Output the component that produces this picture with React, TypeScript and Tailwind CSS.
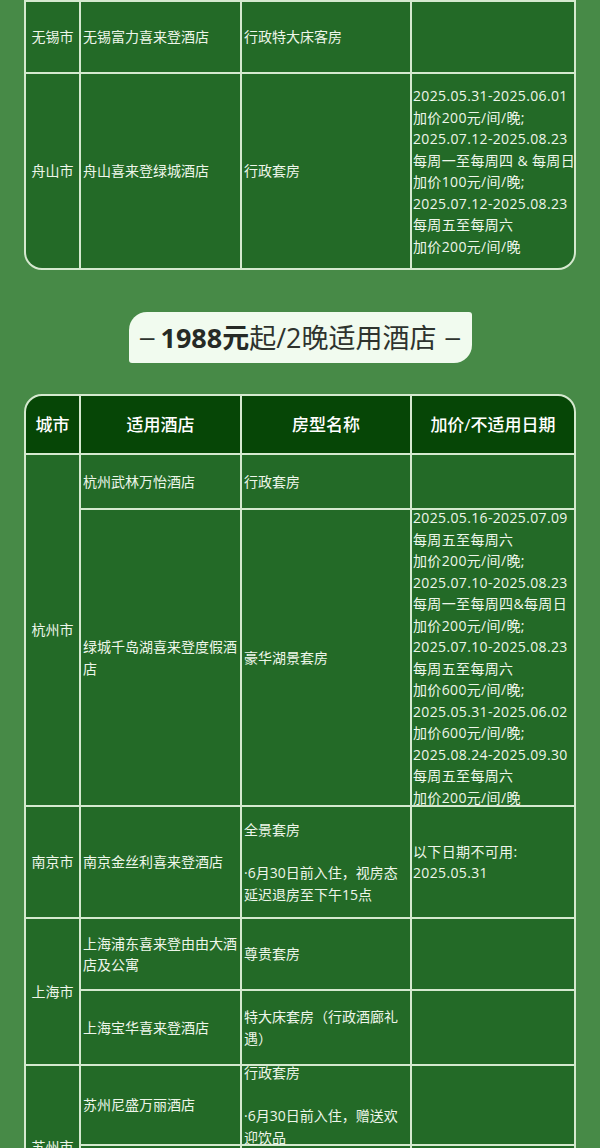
import React from "react";

/* 酒店适用表 — 两段表格 + 中间价格标题 */

const FONT = { fontFamily: '"Open Sans", "Noto Sans CJK SC", sans-serif' };

type Row = {
  city?: string;
  span?: number;
  hotel: string;
  room: string[];
  price: string[];
};

function Lines({ items }: { items: string[] }) {
  return (
    <div>
      {items.map((t, i) =>
        t === "" ? (
          <div key={i} className="h-[21.5px]" />
        ) : (
          <div key={i}>{t}</div>
        )
      )}
    </div>
  );
}

function Body({ rows }: { rows: Row[] }) {
  const cell =
    "flex items-center bg-[#236a27] text-[14px] leading-[21.5px] text-[#eef6ea]";
  return (
    <>
      {rows.map((r, i) => (
        <React.Fragment key={i}>
          {r.city !== undefined && (
            <div
              className={`${cell} justify-center ${
                r.span === 2 ? "row-span-2" : ""
              }`}
            >
              {r.city}
            </div>
          )}
          <div className={`${cell} pl-[2px] pr-[1px]`}>{r.hotel}</div>
          <div className={`${cell} pl-[2px] pr-[1px]`}>
            <Lines items={r.room} />
          </div>
          <div className={`${cell} pl-[1px] whitespace-nowrap tracking-[0.35px]`}>
            <Lines items={r.price} />
          </div>
        </React.Fragment>
      ))}
    </>
  );
}

const table1: Row[] = [
  { city: "无锡市", hotel: "无锡富力喜来登酒店", room: ["行政特大床客房"], price: [] },
  {
    city: "舟山市",
    hotel: "舟山喜来登绿城酒店",
    room: ["行政套房"],
    price: [
      "2025.05.31-2025.06.01",
      "加价200元/间/晚;",
      "2025.07.12-2025.08.23",
      "每周一至每周四 & 每周日",
      "加价100元/间/晚;",
      "2025.07.12-2025.08.23",
      "每周五至每周六",
      "加价200元/间/晚",
    ],
  },
];

const table2: Row[] = [
  { city: "杭州市", span: 2, hotel: "杭州武林万怡酒店", room: ["行政套房"], price: [] },
  {
    hotel: "绿城千岛湖喜来登度假酒店",
    room: ["豪华湖景套房"],
    price: [
      "2025.05.16-2025.07.09",
      "每周五至每周六",
      "加价200元/间/晚;",
      "2025.07.10-2025.08.23",
      "每周一至每周四&每周日",
      "加价200元/间/晚;",
      "2025.07.10-2025.08.23",
      "每周五至每周六",
      "加价600元/间/晚;",
      "2025.05.31-2025.06.02",
      "加价600元/间/晚;",
      "2025.08.24-2025.09.30",
      "每周五至每周六",
      "加价200元/间/晚",
    ],
  },
  {
    city: "南京市",
    hotel: "南京金丝利喜来登酒店",
    room: ["全景套房", "", "·6月30日前入住，视房态延迟退房至下午15点"],
    price: ["以下日期不可用:", "2025.05.31"],
  },
  { city: "上海市", span: 2, hotel: "上海浦东喜来登由由大酒店及公寓", room: ["尊贵套房"], price: [] },
  { hotel: "上海宝华喜来登酒店", room: ["特大床套房（行政酒廊礼遇）"], price: [] },
  {
    city: "苏州市",
    span: 2,
    hotel: "苏州尼盛万丽酒店",
    room: ["行政套房", "", "·6月30日前入住，赠送欢迎饮品"],
    price: [],
  },
  { hotel: "", room: [], price: [] },
];

function Head() {
  const h =
    "flex items-center justify-center bg-[#064606] text-[17px] font-medium text-white";
  return (
    <>
      <div className={h}>城市</div>
      <div className={h}>适用酒店</div>
      <div className={h}>房型名称</div>
      <div className={h}>加价/不适用日期</div>
    </>
  );
}

export default function App() {
  return (
    <div
      className="w-[600px] min-h-screen overflow-hidden bg-[#478a47] pb-10"
      style={FONT}
    >
      {/* 上一段表格（接续） */}
      <div className="mx-[24px] overflow-hidden rounded-b-[18px] border-2 border-[#d5e9cf] bg-[#d5e9cf]">
        <div className="grid grid-cols-[53px_159px_168px_1fr] grid-rows-[70px_194px] gap-[2px]">
          <Body rows={table1} />
        </div>
      </div>

      {/* 标题 */}
      <div className="mx-auto mt-[42px] flex h-[51px] w-[343px] items-center justify-center gap-[6px] rounded-tl-[18px] rounded-br-[18px] rounded-tr-[3px] rounded-bl-[3px] bg-[#f1fbef] text-[#2e332e]">
        <span className="text-[26px]" style={{ fontFamily: '"Liberation Sans", sans-serif' }}>
          –
        </span>
        <span className="text-[27px] leading-none">
          <span className="font-bold text-[#262a26]">1988元</span>
          <span>起/2晚适用酒店</span>
        </span>
        <span className="ml-[3px] text-[26px]" style={{ fontFamily: '"Liberation Sans", sans-serif' }}>
          –
        </span>
      </div>

      {/* 1988 表格 */}
      <div className="mx-[24px] mt-[31px] overflow-hidden rounded-[18px] border-2 border-[#d5e9cf] bg-[#d5e9cf]">
        <div className="grid grid-cols-[53px_159px_168px_1fr] grid-rows-[57px_53px_295px_110px_70px_73px_78px_82px] gap-[2px]">
          <Head />
          <Body rows={table2} />
        </div>
      </div>
    </div>
  );
}
